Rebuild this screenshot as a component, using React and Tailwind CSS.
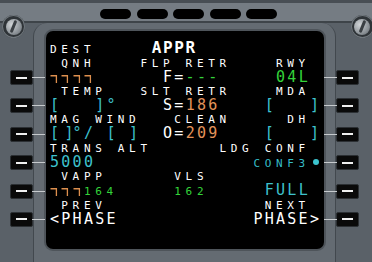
import React from "react";

function Screw({ cls }) {
  return (
    <div className={cls}>
      <div className="w-[23px] h-[23px] rounded-full bg-[#2f3438] flex items-center justify-center shadow-[inset_0_0_0_1px_#70777d]">
        <div className="w-[16px] h-[16px] rounded-full bg-[radial-gradient(circle_at_35%_35%,#d0d4d7,#8e9499_60%,#5c6267)] flex items-center justify-center">
          <div className="w-[3px] h-[13px] rounded-sm bg-[#3a3f43] rotate-[22deg]" />
        </div>
      </div>
    </div>
  );
}

function LSKLeft() {
  return (
    <div className="relative w-[23px] h-[15px] bg-[#0a0a0a] rounded-[2px] border border-[#2c3034] flex items-center justify-center">
      <div className="w-[11px] h-[2px] bg-[#f0f0f0]" />
      <div className="absolute left-full top-[6px] w-[13px] h-[1px] bg-[#c6cacd]" />
    </div>
  );
}

function LSKRight() {
  return (
    <div className="relative w-[23px] h-[15px] bg-[#0a0a0a] rounded-[2px] border border-[#2c3034] flex items-center justify-center">
      <div className="w-[11px] h-[2px] bg-[#f0f0f0]" />
      <div className="absolute right-full top-[6px] w-[13px] h-[1px] bg-[#c6cacd]" />
    </div>
  );
}

function Box() {
  return (
    <span className="inline-block w-[11.3px] align-[-1px]">
      <svg width="8" height="8" viewBox="0 0 8 8" className="block">
        <path d="M0.5 0.75H6.4V8" fill="none" stroke="#dd8f4e" strokeWidth="1.3" />
      </svg>
    </span>
  );
}

function Dot() {
  return (
    <span className="inline-block w-[11.3px] align-[2px]">
      <span className="block w-[6px] h-[6px] ml-[3px] rounded-full bg-[#3cc4cf]" />
    </span>
  );
}

function L({ c, children }) {
  return <span className={c}>{children}</span>;
}

const LG_W = "text-[15px] tracking-[2.27px] text-white";
const LG_G = "text-[15px] tracking-[2.27px] text-[#34d43a]";
const LG_C = "text-[15px] tracking-[2.27px] text-[#3ec2ce]";
const LG_A = "text-[15px] tracking-[2.27px] text-[#e3935a]";
const SM_G = "text-[#34d43a]";
const SM_C = "text-[#35bcc6]";

function LabelRow({ children }) {
  return (
    <div className="h-[13px] leading-[13px] whitespace-pre text-[11px] tracking-[4.678px] text-white">
      {children}
    </div>
  );
}

function DataRow({ children }) {
  return (
    <div className="h-[15.4px] leading-[15.4px] whitespace-pre text-[11px] tracking-[4.678px] text-white">
      {children}
    </div>
  );
}

export default function App() {
  return (
    <div className="w-[372px] h-[262px] overflow-hidden bg-[#5a6168] flex flex-col font-['DejaVu_Sans_Mono',monospace]">
      <div className="h-[3px] bg-[#484e54]" />
      <div className="h-[18px] bg-[#757c83] flex gap-[5.6px] pl-[100px] pt-[6px]">
        <div className="w-[31px] h-[10px] rounded-full bg-black" />
        <div className="w-[31px] h-[10px] rounded-full bg-black" />
        <div className="w-[31px] h-[10px] rounded-full bg-black" />
        <div className="w-[31px] h-[10px] rounded-full bg-black" />
        <div className="w-[31px] h-[10px] rounded-full bg-black" />
      </div>
      <div className="h-[2px] bg-[#3e4449]" />
      <div className="flex flex-1">
        <div className="w-[33px] shrink-0 flex flex-col">
          <Screw cls="-mt-[8px] ml-[2px] w-[23px]" />
          <div className="mt-[32px] ml-[10px] flex flex-col gap-[13.4px]">
            <LSKLeft />
            <LSKLeft />
            <LSKLeft />
            <LSKLeft />
            <LSKLeft />
            <LSKLeft />
          </div>
        </div>
        <div className="w-[303px] shrink-0 rounded-t-[14px] bg-[#646b72] border-x border-[#42484e] pl-[12px] pr-[11px] pt-[8px] pb-[13px]">
          <div className="w-[278px] h-[218px] bg-black rounded-[7px] shadow-[0_0_0_2px_#4e545a] pl-[4px] pt-[9.3px]">
            <div className="h-[16.4px] leading-[16.4px] whitespace-pre text-[11px] tracking-[4.678px] text-white">
              DEST{"     "}
              <span className="text-[16px] font-bold tracking-[1.667px]">APPR</span>
            </div>
            <LabelRow>{" QNH    FLP RETR    RWY"}</LabelRow>
            <DataRow>
              <Box />
              <Box />
              <Box />
              <Box />
              {"      "}
              <L c={LG_W}>F=</L>
              <L c={LG_G}>---</L>
              {"     "}
              <L c={LG_G}>04L</L>
            </DataRow>
            <LabelRow>{" TEMP   SLT RETR    MDA"}</LabelRow>
            <DataRow>
              <L c={LG_C}>{"[   ]°"}</L>
              {"    "}
              <L c={LG_W}>S=</L>
              <L c={LG_A}>186</L>
              {"    "}
              <L c={LG_C}>{"[   ]"}</L>
            </DataRow>
            <LabelRow>{"MAG WIND   CLEAN     DH"}</LabelRow>
            <DataRow>
              <span className="text-[15px] tracking-[5.5px] text-[#3ec2ce]">[</span>
              <span className="text-[15px] tracking-[-0.96px] text-[#3ec2ce]">]</span>
              <L c={LG_C}>{"°/ [ ]"}</L>
              {"  "}
              <L c={LG_W}>O=</L>
              <L c={LG_A}>209</L>
              {"    "}
              <L c={LG_C}>{"[   ]"}</L>
            </DataRow>
            <LabelRow>{"TRANS ALT      LDG CONF"}</LabelRow>
            <DataRow>
              <L c={LG_C}>5000</L>
              {"              "}
              <L c={SM_C}>CONF3</L>
              <Dot />
            </DataRow>
            <LabelRow>{" VAPP      VLS"}</LabelRow>
            <DataRow>
              <Box />
              <Box />
              <Box />
              <L c={SM_G}>164</L>
              {"     "}
              <L c={SM_G}>162</L>
              {"     "}
              <L c={LG_C}>FULL</L>
            </DataRow>
            <LabelRow>{" PREV              NEXT"}</LabelRow>
            <DataRow>
              <L c={LG_W}>{"<PHASE"}</L>
              {"            "}
              <L c={LG_W}>{"PHASE>"}</L>
            </DataRow>
          </div>
        </div>
        <div className="w-[36px] shrink-0 flex flex-col">
          <Screw cls="-mt-[8px] ml-[14.5px] w-[23px]" />
          <div className="mt-[32px] flex flex-col gap-[13.4px]">
            <LSKRight />
            <LSKRight />
            <LSKRight />
            <LSKRight />
            <LSKRight />
            <LSKRight />
          </div>
        </div>
      </div>
    </div>
  );
}
